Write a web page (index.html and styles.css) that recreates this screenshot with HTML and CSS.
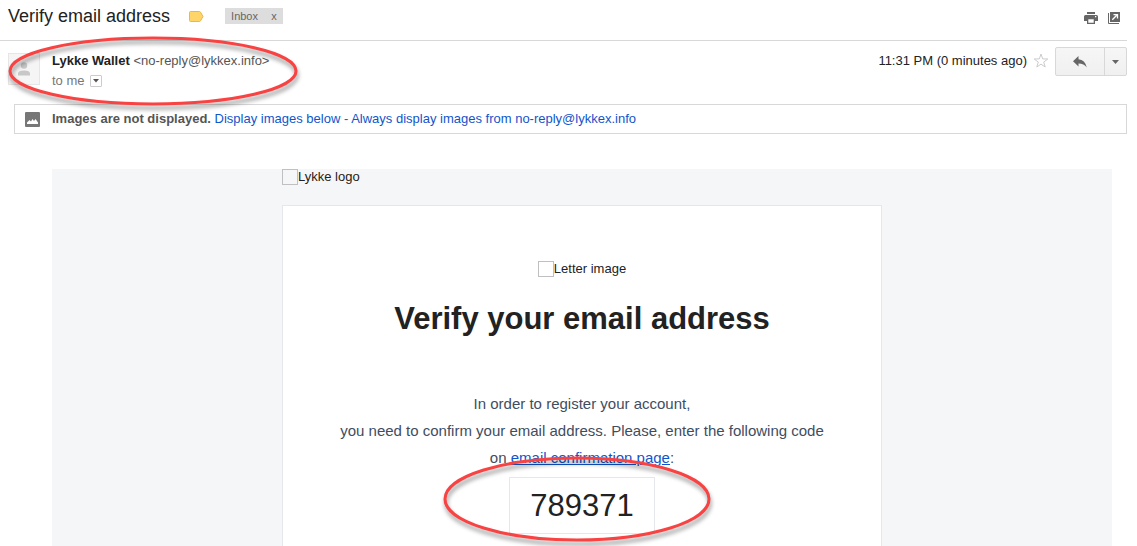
FILE: index.html
```html
<!DOCTYPE html>
<html lang="en">

<head>
  <meta charset="UTF-8">
  <meta name="viewport" content="width=device-width, initial-scale=1.0">
  <title>Verify email address</title>
  <link rel="stylesheet" href="styles.css">
</head>

<body>
  <header class="subject-bar">
    <h1>Verify email address</h1>
    <svg class="marker" width="15" height="11" viewBox="0 0 15 11">
      <path d="M1.5 .5h8.800q.7 0 1.200.6l2.500 4.400-2.500 4.400q-.5.6-1.200.6H1.500q-1 0-1-1v-8q0-1 1-1z" fill="#ffd56a" stroke="#e6b84d" />
    </svg>
    <div class="label">
      <span>Inbox</span>
      <button type="button" aria-label="Remove label">x</button>
    </div>
    <div class="tools">
      <button type="button" aria-label="Print">
        <svg width="14" height="12" viewBox="0 0 14 12" fill="#666">
          <path d="M3 0h8v2H3zM1.500 3h11Q14 3 14 4.500V9h-3V6H3v3H0V4.500Q0 3 1.500 3z" />
          <path d="M3 6h8v6H3zM4.300 7.300v3.400h5.400V7.300z" fill-rule="evenodd" />
          <path d="M11 4h1.300v1.200H11z" fill="#fff" />
        </svg>
      </button>
      <button type="button" aria-label="In new window">
        <svg width="12" height="12" viewBox="0 0 12 12">
          <path d="M2 0h10v10H2z" fill="#666" />
          <path d="M.5 1v10.500H11" fill="none" stroke="#666" />
          <path d="M4.300 7.700 9 3M5.500 2.600h4v4" fill="none" stroke="#fff" stroke-width="1.300" />
        </svg>
      </button>
    </div>
  </header>

  <main>
    <section class="sender-row">
      <div class="avatar">
        <svg width="14" height="14" viewBox="0 0 14 14" fill="#c8c8c8">
          <circle cx="7" cy="3.500" r="3.200" />
          <path d="M1 13.500v-2Q1 8.500 7 8.500t6 3v2z" />
        </svg>
      </div>
      <div class="sender">
        <p><strong>Lykke Wallet</strong> <span>&lt;no-reply@lykkex.info&gt;</span></p>
        <p class="recipient">to me
          <button type="button" aria-label="Show details">
            <svg width="6" height="4" viewBox="0 0 6 4"><path d="M0 0h6L3 3.500z" fill="#555" /></svg>
          </button>
        </p>
      </div>
      <time>11:31 PM (0 minutes ago)</time>
      <button type="button" class="star" aria-label="Star">
        <svg width="16" height="15" viewBox="0 0 16 15">
          <path d="M8 1l1.700 4.900 5.100.1-4.100 3.100 1.500 4.900L8 11.100 3.800 14l1.500-4.900L1.200 6l5.100-.1z" fill="#fff" stroke="#ccc" />
        </svg>
      </button>
      <div class="reply-group">
        <button type="button" class="reply" aria-label="Reply">
          <svg width="14" height="12" viewBox="0 0 14 12"><path d="M5.500 0v3.200Q12 3.600 13.800 11.500 11 7.500 5.500 7.500v3L0 5.200z" fill="#666" /></svg>
        </button>
        <button type="button" class="more" aria-label="More">
          <svg width="7" height="4" viewBox="0 0 7 4"><path d="M0 0h7L3.500 4z" fill="#666" /></svg>
        </button>
      </div>
      <svg class="ring ring-sender" viewBox="0 0 288 68">
        <ellipse cx="144" cy="34" rx="143" ry="33" />
      </svg>
    </section>

    <section class="image-notice">
      <svg width="15" height="15" viewBox="0 0 15 15">
        <rect width="15" height="15" rx="1" fill="#777" />
        <path d="M2 12v-1.500L4.500 8l1.500 1.500L7.500 7 9 9l1.500-2L13 10.500V12z" fill="#fff" />
      </svg>
      <p><strong>Images are not displayed.</strong> <a href="#">Display images below</a> - <a href="#">Always display images from no-reply@lykkex.info</a></p>
    </section>

    <article class="mail">
      <div class="mail-inner">
        <p class="missing"><span class="missing-box"></span>Lykke logo</p>
        <div class="card">
          <p class="missing"><span class="missing-box"></span>Letter image</p>
          <h2>Verify your email address</h2>
          <p class="message">In order to register your account,<br>
            you need to confirm your email address. Please, enter the following code<br>
            on <a href="#">email confirmation page</a>:</p>
          <div class="code">789371
            <svg class="ring ring-code" viewBox="0 0 268 86">
              <ellipse cx="134" cy="43" rx="132" ry="41" />
            </svg>
          </div>
        </div>
      </div>
    </article>
  </main>
</body>

</html>
```

FILE: styles.css
```css
* {
  box-sizing: border-box;
}

body {
  margin: 0;
  min-height: 100vh;
  display: flex;
  flex-direction: column;
  font-family: "Liberation Sans", Arial, sans-serif;
  font-size: 13px;
  line-height: 20px;
  color: #222;
  background: #fff;
}

h1,
h2,
p {
  margin: 0;
}

button {
  display: flex;
  align-items: center;
  justify-content: center;
  padding: 0;
  border: 0;
  background: none;
  font: inherit;
  color: inherit;
  cursor: pointer;
}

svg {
  flex: none;
}

a {
  color: #15c;
  text-decoration: none;
}

.subject-bar {
  display: flex;
  align-items: center;
  height: 41px;
  padding: 0 7px 8px 8px;
  margin-right: 10px;
  border-bottom: 1px solid #d8d8d8;
}

.subject-bar h1 {
  font-size: 18px;
  font-weight: normal;
}

.marker {
  margin-left: 19px;
}

.label {
  display: flex;
  margin-left: 21px;
  font-size: 11px;
  line-height: 16px;
  color: #666;
  background: #ddd;
}

.label span {
  padding: 0 7px 0 6px;
}

.label button {
  width: 18px;
}

.tools {
  display: flex;
  gap: 10px;
  margin-left: auto;
  padding-top: 4px;
}

main {
  flex: 1;
  display: flex;
  flex-direction: column;
}

.sender-row {
  position: relative;
  display: flex;
  align-items: flex-start;
  padding: 6px 10px 13px 8px;
}

.avatar {
  display: flex;
  align-items: center;
  justify-content: center;
  width: 32px;
  height: 32px;
  margin: 6px 12px 0 0;
  border: 1px solid #e6e6e6;
  background: #f5f5f5;
}

.sender {
  flex: 1;
  padding-top: 4px;
}

.sender span {
  color: #555;
}

.recipient {
  display: flex;
  align-items: center;
  gap: 5px;
  color: #777;
}

.recipient button {
  width: 12px;
  height: 12px;
  border: 1px solid #ccc;
  border-radius: 1px;
}

.sender-row time {
  padding-top: 4px;
}

.star {
  margin: 6px 6px 0;
}

.reply-group {
  display: flex;
  height: 29px;
  border: 1px solid #d8d8d8;
  border-radius: 2px;
  background: linear-gradient(#f6f6f6, #f0f0f0);
}

.reply {
  width: 48px;
}

.more {
  width: 22px;
  border-left: 1px solid #d8d8d8;
}

.image-notice {
  display: flex;
  align-items: center;
  gap: 12px;
  height: 30px;
  margin: 0 10px 35px 14px;
  padding-left: 10px;
  border: 1px solid #d8d8d8;
  color: #555;
}

.mail {
  flex: 1;
  display: flex;
  justify-content: center;
  margin: 0 25px 0 52px;
  background: #f5f6f8;
}

.mail-inner {
  display: flex;
  flex-direction: column;
  width: 600px;
}

.missing {
  display: flex;
  line-height: 16px;
}

.missing-box {
  width: 16px;
  height: 16px;
  border: 1px solid #c0c0c0;
}

.card {
  flex: 1;
  display: flex;
  flex-direction: column;
  align-items: center;
  margin-top: 20px;
  padding-top: 55px;
  border: 1px solid #e5e7ea;
  border-bottom: 0;
  background: #fff;
  text-align: center;
}

.card h2 {
  margin: 22px 0 51px;
  font-size: 31px;
  line-height: 40px;
}

.message {
  font-size: 15px;
  line-height: 27px;
  color: #3f4d60;
}

.message a {
  text-decoration: underline;
}

.code {
  position: relative;
  margin-top: 6px;
  padding: 0 20px;
  border: 1px solid #e5e7ea;
  font-size: 31px;
  line-height: 55px;
}

/* hand-drawn highlights over the mail */
.ring {
  position: absolute;
  overflow: visible;
  pointer-events: none;
  fill: none;
  stroke: #f94343;
  stroke-width: 3px;
  filter: drop-shadow(1px 4px 2px rgba(0, 0, 0, 0.4));
}

.ring-sender {
  top: -4px;
  left: 9px;
  width: 288px;
}

.ring-code {
  top: -22px;
  left: -67px;
  width: 268px;
}
```
